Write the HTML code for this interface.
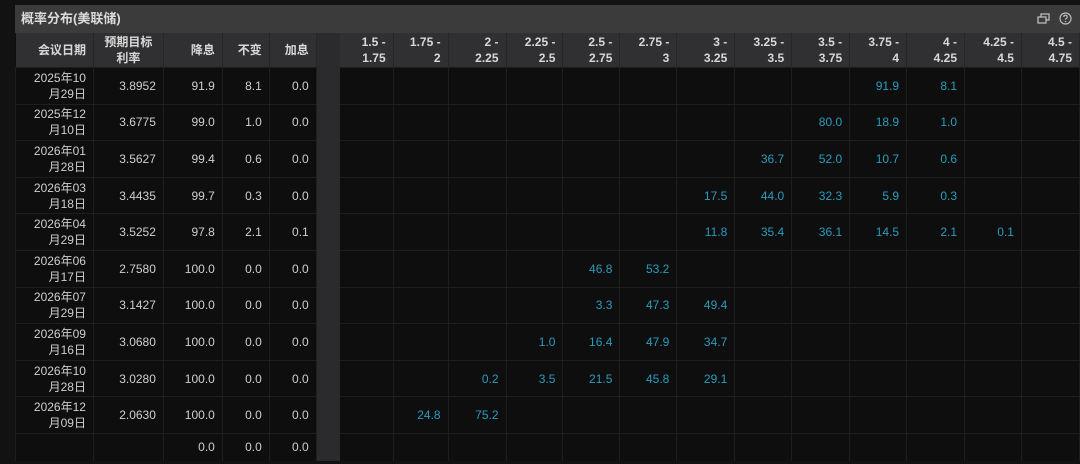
<!DOCTYPE html>
<html><head><meta charset="utf-8"><style>
html,body{margin:0;padding:0;background:#121212;width:1080px;height:464px;overflow:hidden;font-family:"Liberation Sans","Noto Sans CJK SC",sans-serif;}
.panel{position:absolute;left:15px;top:5px;width:1065px;height:456px;background:#0e0e0f;overflow:hidden;}
.title{position:absolute;left:0;top:0;width:1065px;height:28px;background:#3b3b3c;color:#dcdcdc;font-weight:bold;font-size:13px;line-height:28px;padding-left:6px;box-sizing:border-box;}
table{position:absolute;left:0;top:28px;border-collapse:collapse;table-layout:fixed;}
td,th{padding:0 7px 0 0;text-align:right;font-size:12px;line-height:16px;overflow:hidden;white-space:nowrap;}
th{background:#303032;color:#d8d8d8;font-weight:bold;height:34px;border-right:1px solid #262627;}
td{color:#cfcfcf;height:35.6px;border:1px solid #1e1e1f;}
td.t{color:#2b9cbc;}
td.g,th.g{background:#2b2b2d;border-color:#2b2b2d;}
tr.last td{height:27px;}
</style></head><body>
<div class="panel">
<div class="title">概率分布(美联储)
<svg style="position:absolute;right:30px;top:8px" width="13" height="12" viewBox="0 0 13 12"><rect x="4" y="1" width="8" height="6" fill="none" stroke="#bbb" stroke-width="1.3"/><rect x="1" y="4" width="8" height="6" fill="#3b3b3c" stroke="#bbb" stroke-width="1.3"/></svg>
<svg style="position:absolute;right:8px;top:7px" width="13" height="13" viewBox="0 0 13 13"><circle cx="6.5" cy="6.5" r="5.5" fill="none" stroke="#bbb" stroke-width="1.2"/><path d="M4.8 5a1.7 1.7 0 1 1 2.4 1.5c-.6.3-.7.6-.7 1.3" fill="none" stroke="#bbb" stroke-width="1.2"/><circle cx="6.5" cy="9.6" r=".7" fill="#bbb"/></svg>
</div>
<table>
<colgroup><col style="width:78px"><col style="width:70px"><col style="width:59px"><col style="width:47px"><col style="width:47px"><col style="width:23px"><col style="width:54px"><col style="width:55px"><col style="width:58px"><col style="width:57px"><col style="width:57px"><col style="width:57px"><col style="width:58px"><col style="width:57px"><col style="width:58px"><col style="width:57px"><col style="width:58px"><col style="width:57px"><col style="width:58px"></colgroup>
<tr><th>会议日期</th><th style="text-align:center;padding:0">预期目标<br>利率</th><th>降息</th><th>不变</th><th>加息</th><th class="g"></th><th>1.5 -<br>1.75</th><th>1.75 -<br>2</th><th>2 -<br>2.25</th><th>2.25 -<br>2.5</th><th>2.5 -<br>2.75</th><th>2.75 -<br>3</th><th>3 -<br>3.25</th><th>3.25 -<br>3.5</th><th>3.5 -<br>3.75</th><th>3.75 -<br>4</th><th>4 -<br>4.25</th><th>4.25 -<br>4.5</th><th>4.5 -<br>4.75</th></tr>
<tr><td>2025年10<br>月29日</td><td>3.8952</td><td>91.9</td><td>8.1</td><td>0.0</td><td class="g"></td><td></td><td></td><td></td><td></td><td></td><td></td><td></td><td></td><td></td><td class="t">91.9</td><td class="t">8.1</td><td></td><td></td></tr>
<tr><td>2025年12<br>月10日</td><td>3.6775</td><td>99.0</td><td>1.0</td><td>0.0</td><td class="g"></td><td></td><td></td><td></td><td></td><td></td><td></td><td></td><td></td><td class="t">80.0</td><td class="t">18.9</td><td class="t">1.0</td><td></td><td></td></tr>
<tr><td>2026年01<br>月28日</td><td>3.5627</td><td>99.4</td><td>0.6</td><td>0.0</td><td class="g"></td><td></td><td></td><td></td><td></td><td></td><td></td><td></td><td class="t">36.7</td><td class="t">52.0</td><td class="t">10.7</td><td class="t">0.6</td><td></td><td></td></tr>
<tr><td>2026年03<br>月18日</td><td>3.4435</td><td>99.7</td><td>0.3</td><td>0.0</td><td class="g"></td><td></td><td></td><td></td><td></td><td></td><td></td><td class="t">17.5</td><td class="t">44.0</td><td class="t">32.3</td><td class="t">5.9</td><td class="t">0.3</td><td></td><td></td></tr>
<tr><td>2026年04<br>月29日</td><td>3.5252</td><td>97.8</td><td>2.1</td><td>0.1</td><td class="g"></td><td></td><td></td><td></td><td></td><td></td><td></td><td class="t">11.8</td><td class="t">35.4</td><td class="t">36.1</td><td class="t">14.5</td><td class="t">2.1</td><td class="t">0.1</td><td></td></tr>
<tr><td>2026年06<br>月17日</td><td>2.7580</td><td>100.0</td><td>0.0</td><td>0.0</td><td class="g"></td><td></td><td></td><td></td><td></td><td class="t">46.8</td><td class="t">53.2</td><td></td><td></td><td></td><td></td><td></td><td></td><td></td></tr>
<tr><td>2026年07<br>月29日</td><td>3.1427</td><td>100.0</td><td>0.0</td><td>0.0</td><td class="g"></td><td></td><td></td><td></td><td></td><td class="t">3.3</td><td class="t">47.3</td><td class="t">49.4</td><td></td><td></td><td></td><td></td><td></td><td></td></tr>
<tr><td>2026年09<br>月16日</td><td>3.0680</td><td>100.0</td><td>0.0</td><td>0.0</td><td class="g"></td><td></td><td></td><td></td><td class="t">1.0</td><td class="t">16.4</td><td class="t">47.9</td><td class="t">34.7</td><td></td><td></td><td></td><td></td><td></td><td></td></tr>
<tr><td>2026年10<br>月28日</td><td>3.0280</td><td>100.0</td><td>0.0</td><td>0.0</td><td class="g"></td><td></td><td></td><td class="t">0.2</td><td class="t">3.5</td><td class="t">21.5</td><td class="t">45.8</td><td class="t">29.1</td><td></td><td></td><td></td><td></td><td></td><td></td></tr>
<tr><td>2026年12<br>月09日</td><td>2.0630</td><td>100.0</td><td>0.0</td><td>0.0</td><td class="g"></td><td></td><td class="t">24.8</td><td class="t">75.2</td><td></td><td></td><td></td><td></td><td></td><td></td><td></td><td></td><td></td><td></td></tr>
<tr class="last"><td></td><td></td><td>0.0</td><td>0.0</td><td>0.0</td><td class="g"></td><td></td><td></td><td></td><td></td><td></td><td></td><td></td><td></td><td></td><td></td><td></td><td></td><td></td></tr>
</table>
</div>
</body></html>
